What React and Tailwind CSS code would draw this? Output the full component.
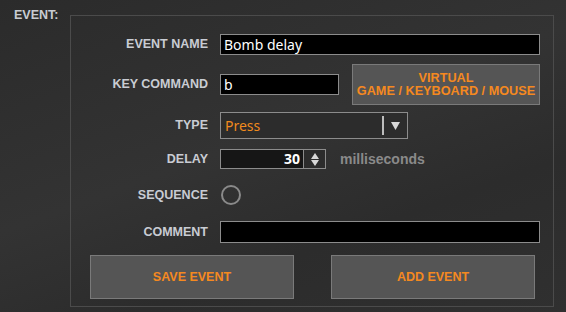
import React from "react";

const label = "w-[137px] shrink-0 text-right text-[12.5px] font-bold text-[#c9ccd3] leading-none";

export default function App() {
  return (
    <div className="w-[566px] h-[312px] overflow-hidden bg-[linear-gradient(160deg,#2b2b2b_0%,#333333_45%,#2c2c2c_70%,#303030_100%)] font-['Liberation_Sans',Arial,sans-serif] flex">
      <div className="w-[70px] shrink-0 pl-[14px] pt-[9px] text-[12.5px] font-bold text-[#c9ccd3] leading-none">EVENT:</div>
      <div className="mt-[15px] w-[484px] h-[292px] border border-[#4b4b4b] flex flex-col">
        {/* Event name */}
        <div className="mt-[18px] flex items-center gap-[12px]">
          <div className={label}>EVENT NAME</div>
          <div className="w-[320px] h-[21px] bg-black border border-[#8c8c8c] flex items-center px-[3px] text-[14px] text-white font-['Noto_Sans',sans-serif] leading-none">Bomb delay</div>
        </div>
        {/* Key command */}
        <div className="mt-[9px] flex items-center gap-[12px]">
          <div className={label}>KEY COMMAND</div>
          <div className="w-[119px] h-[21px] bg-black border border-[#8c8c8c] flex items-center px-[3px] text-[14px] text-white font-['Noto_Sans',sans-serif] leading-none">b</div>
          <div className="ml-[1px] w-[188px] h-[41px] bg-[#555555] border border-[#7a7a7a] flex flex-col items-center justify-center text-[12.7px] font-bold text-[#f5891f] leading-[13px]">
            <span>VIRTUAL</span>
            <span>GAME / KEYBOARD / MOUSE</span>
          </div>
        </div>
        {/* Type */}
        <div className="mt-[7px] flex items-center gap-[12px]">
          <div className={label}>TYPE</div>
          <div className="w-[188px] h-[27px] bg-[#2c2c2c] border border-[#8c8c8c] flex items-center">
            <span className="flex-1 pl-[4px] text-[14px] text-[#f08a1e] font-['Noto_Sans',sans-serif] leading-none">Press</span>
            <span className="w-[2px] h-[19px] bg-[#bdbdbd]"></span>
            <span className="w-[23px] flex items-center justify-center">
              <svg width="9" height="8" viewBox="0 0 9 8"><path d="M0 0 H9 L4.5 8 Z" fill="#d8d8d8" /></svg>
            </span>
          </div>
        </div>
        {/* Delay */}
        <div className="mt-[10px] flex items-center gap-[12px]">
          <div className={label}>DELAY</div>
          <div className="flex h-[20px]">
            <div className="w-[84px] h-[20px] bg-[#161616] border border-[#8c8c8c] flex items-center justify-end pr-[3px] text-[14px] font-bold text-white leading-none font-['Noto_Sans',sans-serif]">30</div>
            <div className="w-[22px] h-[20px] bg-[#2c2c2c] border border-l-0 border-[#8c8c8c] flex flex-col items-center justify-center gap-[1px]">
              <svg width="8" height="6" viewBox="0 0 8 6"><path d="M4 0 L8 6 H0 Z" fill="#d8d8d8" /></svg>
              <svg width="8" height="6" viewBox="0 0 8 6"><path d="M0 0 H8 L4 6 Z" fill="#d8d8d8" /></svg>
            </div>
          </div>
          <span className="ml-[2px] text-[14px] font-bold text-[#8a8a8a] leading-none">milliseconds</span>
        </div>
        {/* Sequence */}
        <div className="mt-[16px] flex items-center gap-[12px]">
          <div className={label}>SEQUENCE</div>
          <div className="ml-[1px] w-[20px] h-[20px] rounded-full border-[2px] border-[#8a8a8a]"></div>
        </div>
        {/* Comment */}
        <div className="mt-[16px] flex items-center gap-[12px]">
          <div className={label}>COMMENT</div>
          <div className="w-[320px] h-[22px] bg-black border border-[#8c8c8c]"></div>
        </div>
        {/* Buttons */}
        <div className="mt-[12px] flex pl-[19px] gap-[37px]">
          <div className="w-[204px] h-[44px] bg-[#555555] border border-[#7a7a7a] flex items-center justify-center text-[12.5px] font-bold text-[#f5891f] leading-none">SAVE EVENT</div>
          <div className="w-[204px] h-[44px] bg-[#555555] border border-[#7a7a7a] flex items-center justify-center text-[12.5px] font-bold text-[#f5891f] leading-none">ADD EVENT</div>
        </div>
      </div>
    </div>
  );
}
